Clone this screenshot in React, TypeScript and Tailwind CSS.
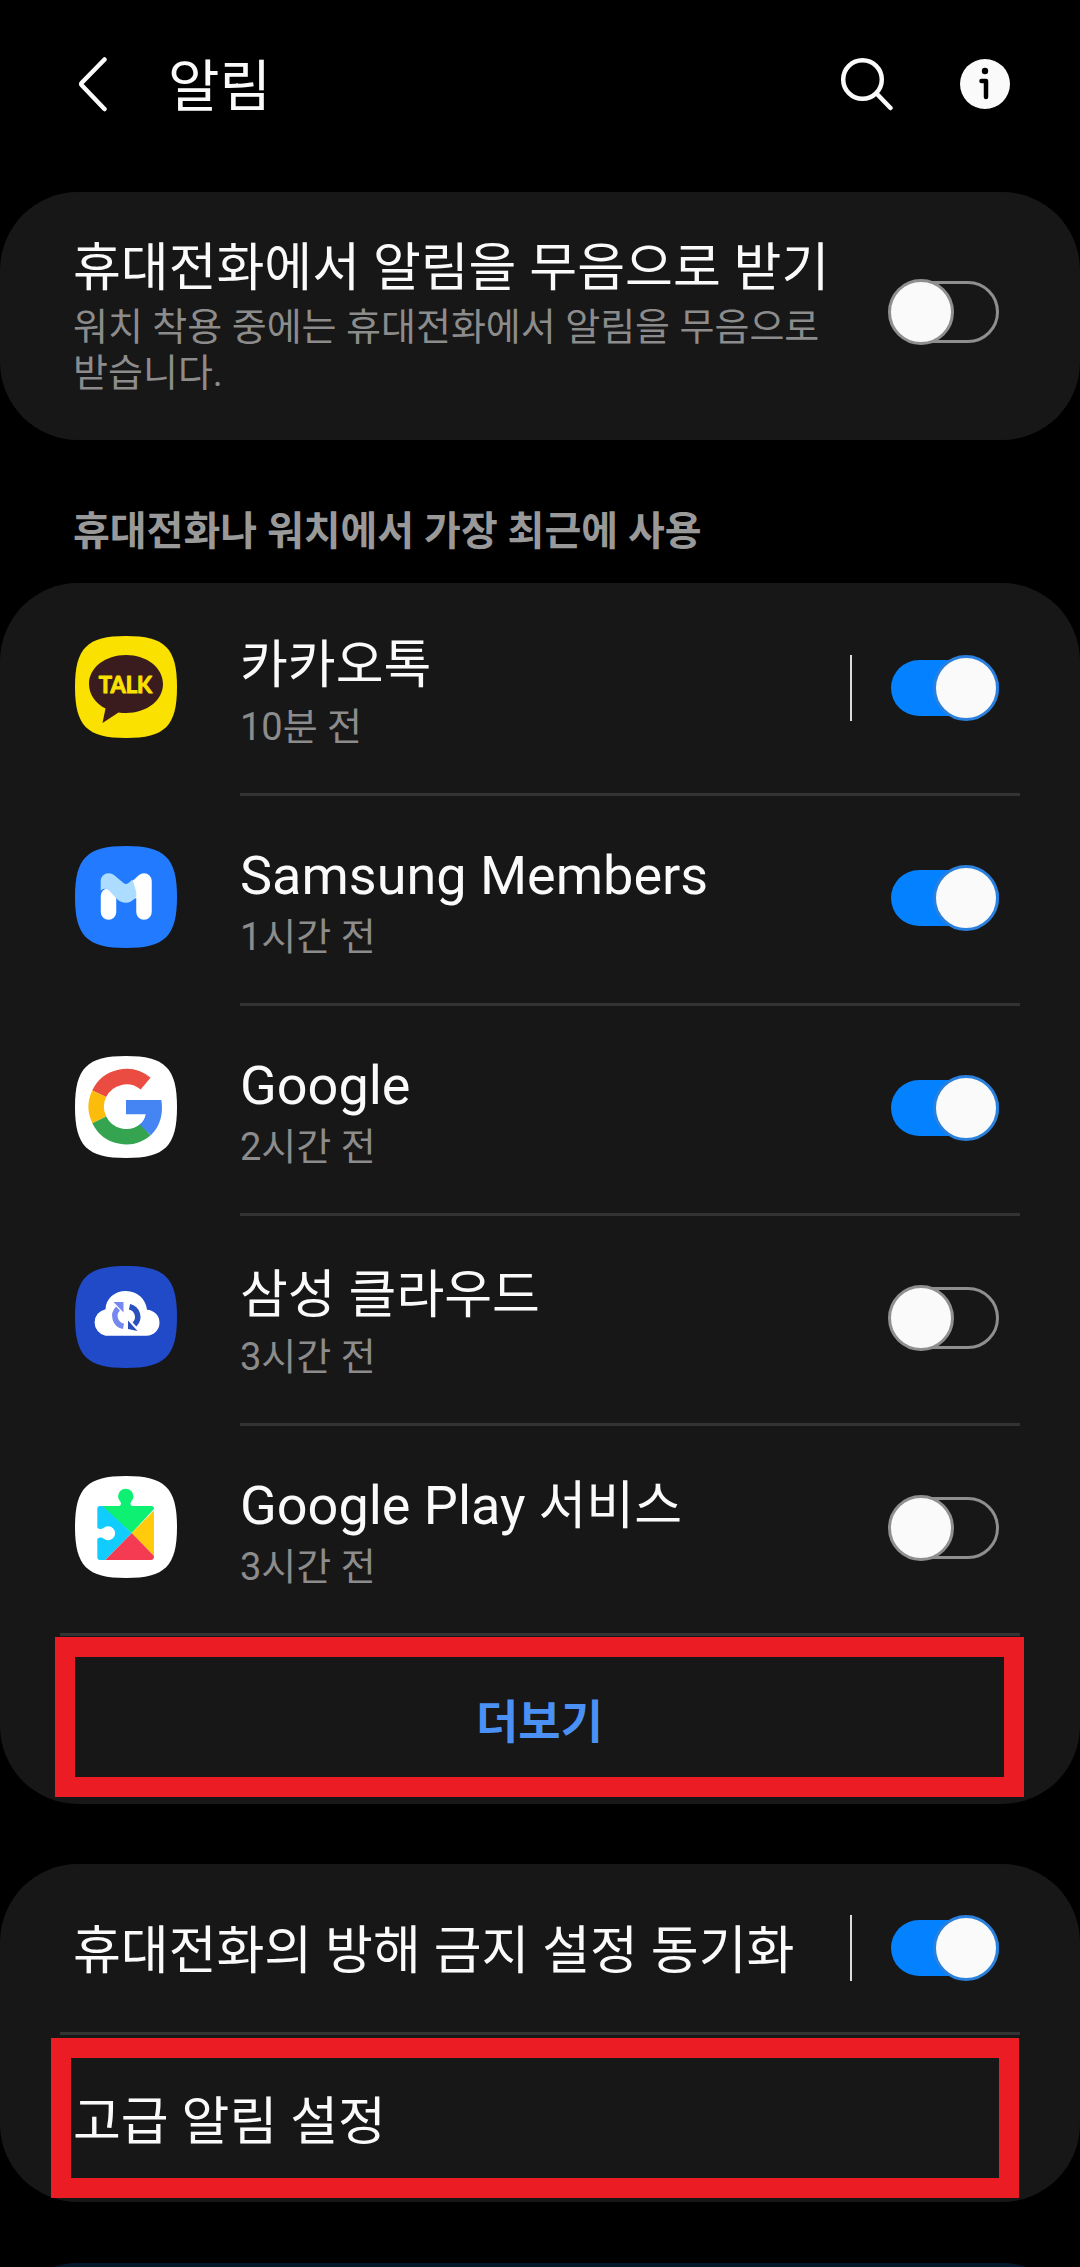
import { useState } from "react";
import type { ReactNode } from "react";

interface AppItem {
  id: string;
  name: ReactNode;
  time: string;
  icon: ReactNode;
  on: boolean;
  split?: boolean;
}

const SQUIRCLE = "M51 0C90 0 102 12 102 51S90 102 51 102 0 90 0 51 12 0 51 0Z";

function IconBase({ fill, children }: { fill: string; children: ReactNode }) {
  return (
    <svg viewBox="0 0 102 102" className="size-[102px] shrink-0" aria-hidden="true">
      <path d={SQUIRCLE} fill={fill} />
      {children}
    </svg>
  );
}

function TalkIcon() {
  return (
    <IconBase fill="#fae100">
      <path
        d="M51 19C30.500 19 14 31.500 14 48c0 10.500 6.500 19.500 16.500 24.500L27.500 87 43.500 76.500c2.500.4 5 .5 7.500.5 20.500 0 37-12.500 37-29S71.500 19 51 19Z"
        fill="#3b1c1e"
      />
      <text
        x="50.500"
        y="57"
        textAnchor="middle"
        fontSize="22"
        fill="#fae100"
        stroke="#fae100"
        strokeWidth="1"
        strokeLinejoin="round"
        className="font-['Lato',sans-serif] font-bold"
      >
        TALK
      </text>
    </IconBase>
  );
}

function MembersIcon() {
  return (
    <IconBase fill="#227bff">
      <g fill="none" strokeWidth="15.500" strokeLinecap="round" strokeLinejoin="round">
        <path d="M33.500 66V50" stroke="#fff" />
        <path d="M69 66V35L58 45" stroke="#fff" />
      </g>
      <path
        d="M25.700 45V35C25.700 28 34 24.500 39.500 29.500L48.500 37Q51 39 53.500 37L57.500 33.500L61.300 46V50.500C56 58.500 47.500 58.500 42 53L35 45.500C32 42 27.500 42 25.700 45Z"
        fill="#acdcff"
      />
    </IconBase>
  );
}

function GoogleIcon() {
  return (
    <IconBase fill="#fff">
      <g fill="none" strokeWidth="15.400">
        <path d="M24.200 37.800A30 30 0 0 1 70.600 27.700" stroke="#ea4c41" />
        <path d="M24.300 63.800A30 30 0 0 1 24.200 37.800" stroke="#fbbc0c" />
        <path d="M70.600 73.700A30 30 0 0 1 24.300 63.800" stroke="#34a450" />
      </g>
      <path
        d="M51 44H86.300C88.500 57 85.500 70 75.900 79.200L64.500 68.600C68 66 70 62.500 70.700 58.300H51Z"
        fill="#4484f3"
      />
    </IconBase>
  );
}

function CloudIcon() {
  return (
    <IconBase fill="#204ac8">
      <path
        d="M30.500 69.700A13.500 13.500 0 0 1 30.500 43.200C31 32.500 39.500 25 51 25S71 33.500 72 43.700A13 13 0 0 1 71 69.700Z"
        fill="#fff"
      />
      <path d="M48.500 60.300A10.500 10.500 0 0 1 43 42.500" fill="none" stroke="#7688ee" strokeWidth="5.500" />
      <path d="M38.500 36H48.500V46.500Z" fill="#7688ee" />
      <path d="M54.500 40.700A10.500 10.500 0 0 1 59.500 58.500" fill="none" stroke="#2a50bd" strokeWidth="5.500" />
      <path d="M53 54.500V63L62.500 65Z" fill="#2a50bd" />
    </IconBase>
  );
}

function PlayServicesIcon() {
  return (
    <IconBase fill="#fff">
      <path
        d="M25 30H44.500C46 29 46.500 27.500 45.500 26A7.700 7.700 0 1 1 56 26C55 27.500 55.500 29 57 30H76.500Q79 30 79 33L56.700 57Z"
        fill="#0ef072"
      />
      <path d="M79 34.500V80L56.700 57Z" fill="#ffcb0b" />
      <path d="M79 80Q79 84 76 84H30L56.700 57Z" fill="#f43b52" />
      <path
        d="M27.500 30H25Q22.300 30 22.300 33V51.500C24 53.500 26.500 53.500 28.500 52A7 7 0 1 1 28.500 62.500C26.500 61 24 61 22.300 63V81Q22.300 84 25 84H30L56.700 57Z"
        fill="#11ccff"
      />
    </IconBase>
  );
}

// Roboto runs a little small beside the Hangul glyphs
function Latin({ children }: { children: string }) {
  return <span className="text-[54px]">{children}</span>;
}

const APPS: AppItem[] = [
  { id: "talk", name: "카카오톡", time: "10분 전", icon: <TalkIcon />, on: true, split: true },
  { id: "members", name: <Latin>Samsung Members</Latin>, time: "1시간 전", icon: <MembersIcon />, on: true },
  { id: "google", name: <Latin>Google</Latin>, time: "2시간 전", icon: <GoogleIcon />, on: true },
  { id: "cloud", name: "삼성 클라우드", time: "3시간 전", icon: <CloudIcon />, on: false },
  { id: "play", name: <><Latin>Google Play</Latin> 서비스</>, time: "3시간 전", icon: <PlayServicesIcon />, on: false },
];

function Toggle({ id, initial }: { id: string; initial: boolean }) {
  const [on, setOn] = useState(initial);
  return (
    <span className="relative flex h-[66px] w-[111px] shrink-0 items-center">
      <input
        id={id}
        type="checkbox"
        role="switch"
        checked={on}
        onChange={(e) => setOn(e.target.checked)}
        className="peer absolute inset-0 z-10 size-full cursor-pointer opacity-0"
      />
      <span className="ml-[3px] h-[62px] w-[108px] rounded-full border-[3px] border-[#8f8f8f] peer-checked:h-14 peer-checked:border-0 peer-checked:bg-[#0381fe]" />
      <span className="absolute left-0 size-[66px] rounded-full border-[3px] border-[#8f8f8f] bg-[#fafafa] peer-checked:right-0 peer-checked:left-auto peer-checked:border-[#2a80dc]" />
    </span>
  );
}

function Card({ children, className = "" }: { children?: ReactNode; className?: string }) {
  return <section className={`shrink-0 rounded-[78px] bg-[#171717] ${className}`}>{children}</section>;
}

function AppRow({ app, first }: { app: AppItem; first: boolean }) {
  return (
    <li className="flex h-[210px] pr-[60px] pl-[75px]">
      <div className="flex items-center pb-[2px]">{app.icon}</div>
      <div
        className={`ml-[63px] flex flex-1 items-center border-t-[3px] pr-[21px] pb-[4px] ${
          first ? "border-transparent" : "border-[#333]"
        }`}
      >
        <label htmlFor={app.id} className="flex-1 pt-[10px]">
          <span className="block h-[68px] text-[52px] leading-[68px]">{app.name}</span>
          <span className="block text-[38px] leading-[54px] text-[#8c8c8c]">{app.time}</span>
        </label>
        {app.split && <span className="mr-[36px] h-[66px] w-[2px] bg-[#dcdcdc]" />}
        <Toggle id={app.id} initial={app.on} />
      </div>
    </li>
  );
}

export default function App() {
  return (
    <main
      lang="ko"
      className="flex h-screen flex-col overflow-hidden bg-black font-['Roboto','Noto_Sans_CJK_KR',sans-serif] text-[#fafafa]"
    >
      <header className="mb-6 flex h-[168px] shrink-0 items-center pr-[70px] pl-[76px]">
        <button type="button" aria-label="뒤로" className="mr-[58px]">
          <svg viewBox="0 0 34 56" className="h-14 w-[34px]" fill="none" stroke="currentColor" strokeWidth="4.500" strokeLinecap="round" strokeLinejoin="round">
            <path d="M28.500 3.500 6 26.500Q4.500 28 6 29.500L28.500 53" />
          </svg>
        </button>
        <h1 className="flex-1 pt-[6px] text-[56px] leading-[80px]">알림</h1>
        <button type="button" aria-label="검색" className="mr-[66px]">
          <svg viewBox="0 0 54 54" className="size-[54px]" fill="none" stroke="currentColor" strokeWidth="4.500" strokeLinecap="round">
            <circle cx="22.500" cy="22.500" r="19.300" />
            <path d="M37.500 37.500 50.500 51" />
          </svg>
        </button>
        <button type="button" aria-label="정보">
          <svg viewBox="0 0 50 50" className="size-[50px]">
            <circle cx="25" cy="25" r="25" fill="#fafafa" />
            <circle cx="25" cy="12" r="3.200" fill="#000" />
            <path d="M21.500 22H26V38" fill="none" stroke="#000" strokeWidth="4.500" strokeLinecap="round" strokeLinejoin="round" />
          </svg>
        </button>
      </header>

      <Card className="flex h-[248px] items-center pr-[81px] pb-2 pl-[73px]">
        <label htmlFor="mute" className="flex-1 pt-[6px] pr-[55px]">
          <span className="block text-[52px] leading-[70px] whitespace-nowrap">휴대전화에서 알림을 무음으로 받기</span>
          <span className="block text-[38px] leading-[46px] text-[#8c8c8c]">
            워치 착용 중에는 휴대전화에서 알림을 무음으로 받습니다.
          </span>
        </label>
        <Toggle id="mute" initial={false} />
      </Card>

      <h2 className="flex h-[143px] shrink-0 items-end px-[73px] pb-[23px] text-[40px] leading-[56px] font-bold text-[#999]">
        휴대전화나 워치에서 가장 최근에 사용
      </h2>

      <Card className="pb-[7px]">
        <ul>
          {APPS.map((app, i) => (
            <AppRow key={app.id} app={app} first={i === 0} />
          ))}
        </ul>
        <hr className="mx-[60px] mb-px border-t-[3px] border-[#333]" />
        <div className="flex pr-[56px] pl-[55px]">
          <button type="button" className="h-40 flex-1 border-20 border-[#ec1c24] pt-[10px] text-[46px] leading-[60px] font-bold text-[#4a90f5]">
            더보기
          </button>
        </div>
      </Card>

      <Card className="mt-[60px] pb-1">
        <div className="flex h-[168px] items-center pr-[81px] pl-[73px]">
          <label htmlFor="dnd" className="flex-1 pt-[8px] text-[52px] leading-[68px] whitespace-nowrap">
            휴대전화의 방해 금지 설정 동기화
          </label>
          <span className="mr-[36px] h-[66px] w-[2px] bg-[#dcdcdc]" />
          <Toggle id="dnd" initial={true} />
        </div>
        <hr className="mx-[60px] mb-[3px] border-t-[3px] border-[#333]" />
        <div className="flex pr-[61px] pl-[51px]">
          <button
            type="button"
            className="h-40 flex-1 border-20 border-[#ec1c24] pt-[10px] pl-[2px] text-left text-[52px] leading-[68px]"
          >
            고급 알림 설정
          </button>
        </div>
      </Card>

      {/* next card, mostly below the fold */}
      <section className="mt-[61px] h-40 shrink-0 rounded-[78px] bg-[#04182c]" />
    </main>
  );
}
